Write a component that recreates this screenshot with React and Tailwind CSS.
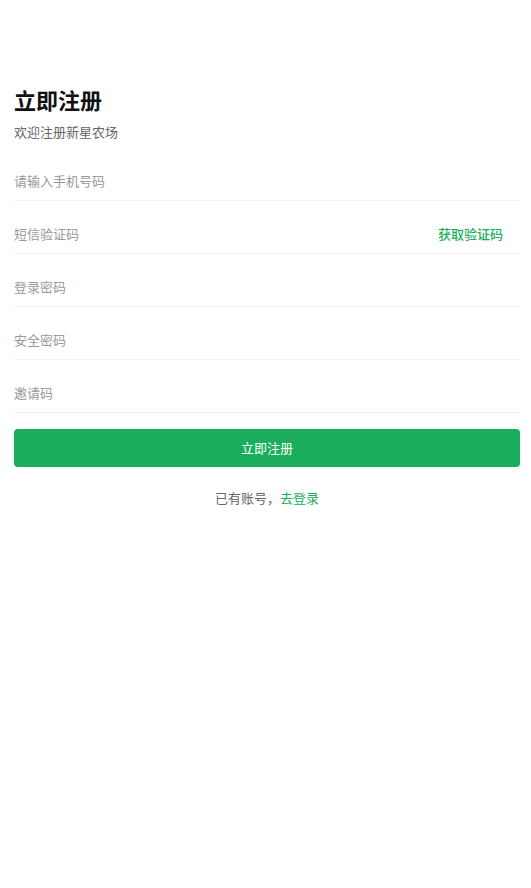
import React, { useState } from 'react';

const fields = [
  { key: 'phone', placeholder: '请输入手机号码', type: 'tel' },
  { key: 'sms', placeholder: '短信验证码', type: 'text', code: true },
  { key: 'password', placeholder: '登录密码', type: 'password' },
  { key: 'safe', placeholder: '安全密码', type: 'password' },
  { key: 'invite', placeholder: '邀请码', type: 'text' },
];

const App = () => {
  const [form, setForm] = useState({});

  return (
    <div
      className="min-h-screen bg-white pl-[14px] pr-[11px] pt-[84px]"
      style={{ fontFamily: '"Noto Sans CJK SC", "Noto Sans", sans-serif' }}
    >
      <h1 className="text-[22px] leading-[30px] font-bold text-[#111]">立即注册</h1>
      <p className="mt-[9px] text-[13px] leading-[18px] text-[#666]">欢迎注册新星农场</p>

      <div className="mt-[20px] flex flex-col gap-[13px]">
        {fields.map((f, i) => (
          <div key={f.key} className="flex h-[40px] items-center border-b border-[#f3f3f3]">
            <input
              type={f.type}
              autoFocus={i === 0}
              value={form[f.key] || ''}
              onChange={(e) => setForm({ ...form, [f.key]: e.target.value })}
              placeholder={f.placeholder}
              className="min-w-0 flex-1 bg-transparent text-[13px] text-[#333] caret-[#1aae5c] outline-none placeholder:text-[#999]"
            />
            {f.code && (
              <button className="pr-[17px] text-[13px] font-medium text-[#1aae5c]">获取验证码</button>
            )}
          </div>
        ))}
      </div>

      <button className="mt-[16px] h-[38px] w-full rounded-[4px] bg-[#1aae5c] text-[13px] text-white">
        立即注册
      </button>

      <p className="mt-[22px] text-center text-[13px] leading-[18px] text-[#666]">
        已有账号，<span className="text-[#1aae5c]">去登录</span>
      </p>
    </div>
  );
};

export default App;
